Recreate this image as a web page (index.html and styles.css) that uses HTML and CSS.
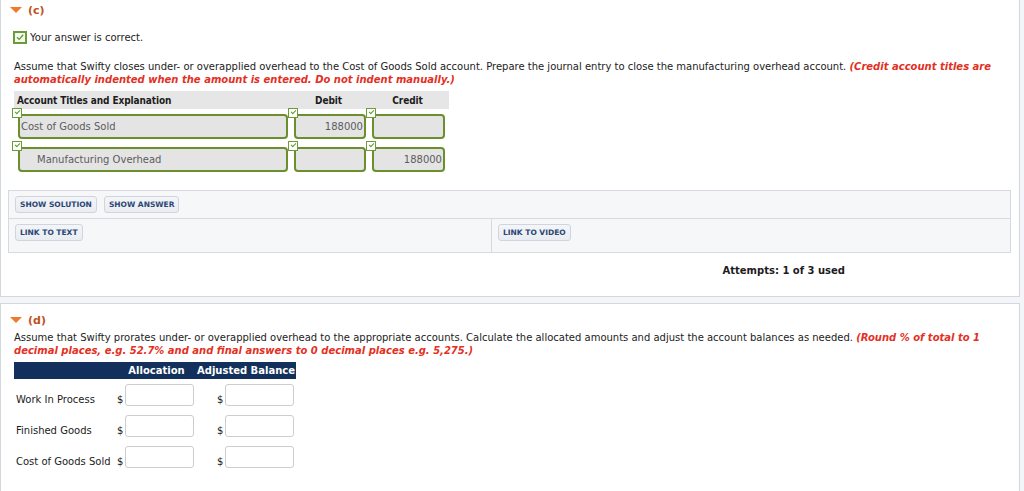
FILE: index.html
```html
<!DOCTYPE html>
<html>
<head>
<meta charset="utf-8">
<link rel="stylesheet" href="styles.css">
</head>
<body>
<div class="panel panel-c">
  <div class="part-head"><span class="tri"></span><span class="part-label">(c)</span></div>
  <div class="correct"><span class="chk"><svg viewBox="0 0 10 10" width="10" height="10"><path d="M2 5.2 L4.2 7.4 L8.2 2.8" fill="none" stroke="#5e9a2c" stroke-width="1.3"/></svg></span><span>Your answer is correct.</span></div>
  <p class="question">Assume that Swifty closes under- or overapplied overhead to the Cost of Goods Sold account. Prepare the journal entry to close the manufacturing overhead account. <em class="note">(Credit account titles are automatically indented when the amount is entered. Do not indent manually.)</em></p>
  <div class="journal">
    <div class="jhead">
      <div class="jh-acct">Account Titles and Explanation</div>
      <div class="jh-num">Debit</div>
      <div class="jh-num">Credit</div>
    </div>
    <div class="jrow">
      <div class="jcell c-acct"><span class="mini"></span><div class="jinput">Cost of Goods Sold</div></div>
      <div class="jcell c-debit"><span class="mini"></span><div class="jinput num">188000</div></div>
      <div class="jcell c-credit"><span class="mini"></span><div class="jinput num"></div></div>
    </div>
    <div class="jrow">
      <div class="jcell c-acct"><span class="mini"></span><div class="jinput indent">Manufacturing Overhead</div></div>
      <div class="jcell c-debit"><span class="mini"></span><div class="jinput num"></div></div>
      <div class="jcell c-credit"><span class="mini"></span><div class="jinput num">188000</div></div>
    </div>
  </div>
  <div class="tools">
    <div class="tools-row first">
      <button class="btn">SHOW SOLUTION</button>
      <button class="btn">SHOW ANSWER</button>
    </div>
    <div class="tools-row split">
      <div class="half left"><button class="btn">LINK TO TEXT</button></div>
      <div class="half"><button class="btn">LINK TO VIDEO</button></div>
    </div>
  </div>
  <div class="attempts">Attempts: 1 of 3 used</div>
</div>
<div class="panel panel-d">
  <div class="part-head"><span class="tri"></span><span class="part-label">(d)</span></div>
  <p class="question q-d">Assume that Swifty prorates under- or overapplied overhead to the appropriate accounts. Calculate the allocated amounts and adjust the account balances as needed. <em class="note">(Round % of total to 1 decimal places, e.g. 52.7% and and final answers to 0 decimal places e.g. 5,275.)</em></p>
  <div class="alloc">
    <div class="ah blank"></div>
    <div class="ah">Allocation</div>
    <div class="ah">Adjusted Balance</div>

    <div class="alabel">Work In Process</div>
    <div class="acell"><span class="dollar">$</span><span class="abox"></span></div>
    <div class="acell wide"><span class="dollar">$</span><span class="abox"></span></div>

    <div class="alabel">Finished Goods</div>
    <div class="acell"><span class="dollar">$</span><span class="abox"></span></div>
    <div class="acell wide"><span class="dollar">$</span><span class="abox"></span></div>

    <div class="alabel">Cost of Goods Sold</div>
    <div class="acell"><span class="dollar">$</span><span class="abox"></span></div>
    <div class="acell wide"><span class="dollar">$</span><span class="abox"></span></div>
  </div>
</div>
</body>
</html>
```

FILE: styles.css
```css
html, body {
  margin: 0;
  padding: 0;
}
body {
  background: #f4f5f8;
  font-family: "DejaVu Sans", Verdana, sans-serif;
  font-size: 10px;
  color: #1c1c1c;
  width: 1024px;
  height: 491px;
  overflow: hidden;
}
.panel {
  box-sizing: border-box;
  width: 1020px;
  background: #fff;
  border: 1px solid #d2d6dd;
}
.panel-c {
  border-top: none;
  height: 297px;
  padding: 3px 0 0 9px;
}
.panel-d {
  margin-top: 6px;
  height: 200px;
  padding: 9px 0 0 9px;
}
.part-head {
  display: flex;
  align-items: center;
  height: 14px;
  gap: 6px;
}
.tri {
  width: 0;
  height: 0;
  border-left: 6px solid transparent;
  border-right: 6px solid transparent;
  border-top: 6px solid #ee7b2b;
}
.part-label {
  color: #c1521c;
  font-weight: bold;
  font-size: 11px;
}
.correct {
  display: flex;
  align-items: center;
  gap: 3px;
  margin-top: 13px;
  padding-left: 3px;
  height: 14px;
}
.chk {
  box-sizing: border-box;
  width: 14px;
  height: 13px;
  border: 2px solid #6d9b3a;
  background: #f4f9ee;
  display: flex;
  align-items: center;
  justify-content: center;
}
.chk svg { display: block; }
.question {
  margin: 16px 0 0 4px;
  line-height: 13px;
  width: 990px;
}
.note {
  color: #e3301f;
  font-weight: bold;
  font-style: italic;
}
.q-d { margin-top: 4px; }
.journal {
  margin-top: 5px;
  margin-left: 2px;
}
.jhead {
  display: flex;
  width: 435px;
  height: 18px;
  margin-left: 2px;
  margin-bottom: -1px;
  background: #e6e6e6;
  font-family: "DejaVu Sans Condensed", "DejaVu Sans", sans-serif;
  font-weight: bold;
  letter-spacing: -0.1px;
  align-items: center;
}
.jh-acct { width: 272px; padding-left: 3px; }
.jh-num { width: 79px; text-align: center; }
.jrow {
  display: flex;
  margin-bottom: 2px;
}
.jcell {
  position: relative;
  padding: 6px 0 0 6px;
}
.mini {
  position: absolute;
  left: 0;
  top: 0;
  box-sizing: border-box;
  width: 10px;
  height: 10px;
  border: 1px solid #6d9b3a;
  background: #fff;
}
.mini::after {
  content: "";
  position: absolute;
  left: 2px;
  top: 1px;
  width: 4px;
  height: 2px;
  border-left: 1px solid #5e9a2c;
  border-bottom: 1px solid #5e9a2c;
  transform: rotate(-45deg);
}
.jinput {
  box-sizing: border-box;
  height: 25px;
  border: 2px solid #6b8f2c;
  border-radius: 4px;
  background: #e4e4e4;
  color: #5c5c5c;
  padding: 0 1px;
  display: flex;
  align-items: center;
  white-space: nowrap;
}
.c-acct .jinput { width: 270px; }
.c-debit .jinput { width: 72px; }
.c-credit .jinput { width: 73px; }
.jinput.num { justify-content: flex-end; }
.jinput.indent { padding-left: 17px; }
.tools {
  box-sizing: border-box;
  width: 1003px;
  margin: 18px 0 0 -2px;
  background: #f6f7f9;
  border: 1px solid #d5d9e0;
}
.tools-row {
  display: flex;
}
.tools-row.first {
  gap: 7px;
  height: 28px;
  padding: 5px 0 0 6px;
  box-sizing: border-box;
  border-bottom: 1px solid #d5d9e0;
}
.half {
  height: 33px;
  padding: 5px 0 0 6px;
  box-sizing: border-box;
}
.half.left {
  width: 483px;
  border-right: 1px solid #d5d9e0;
}
.btn {
  font-family: "DejaVu Sans", Verdana, sans-serif;
  font-weight: bold;
  font-size: 7.5px;
  color: #2b4774;
  height: 17px;
  padding: 0 4px;
  border: 1px solid #d0d5dd;
  border-radius: 3px;
  background: linear-gradient(#f4f5f8, #e9ecf1);
  letter-spacing: 0;
}
.attempts {
  font-weight: bold;
  font-size: 10px;
  text-align: right;
  padding-right: 174px;
  margin-top: 12px;
}
.alloc {
  display: grid;
  grid-template-columns: 103px 79px 100px;
  grid-template-rows: 17px 27px 31px 31px;
  align-items: end;
  margin: 5px 0 0 4px;
}
.ah {
  align-self: stretch;
  background: #12305b;
  color: #fff;
  font-weight: bold;
  line-height: 17px;
  text-align: center;
  white-space: nowrap;
}
.alabel {
  padding-left: 2px;
  white-space: nowrap;
  line-height: 12px;
}
.acell {
  display: flex;
  align-items: flex-end;
}
.acell.wide { padding-left: 21px; }
.dollar { width: 8px; line-height: 12px; }
.abox {
  box-sizing: border-box;
  width: 69px;
  height: 22px;
  border: 1px solid #cdcdcd;
  border-radius: 3px;
  background: #fff;
}
```
